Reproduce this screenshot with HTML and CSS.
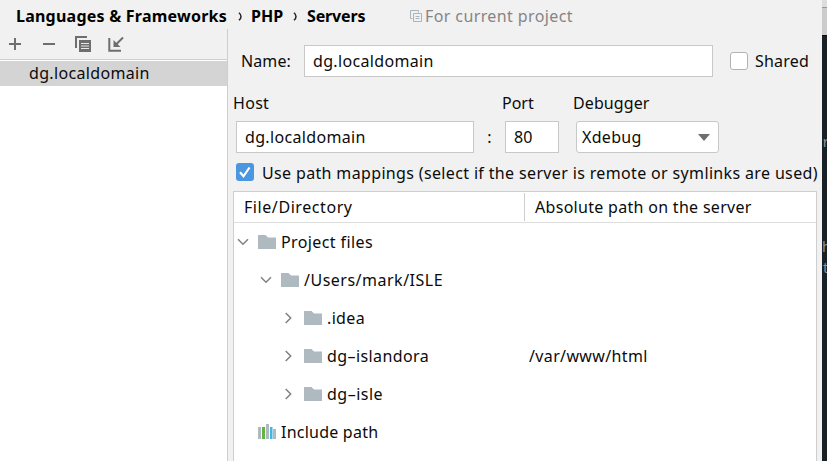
FILE: index.html
```html
<!DOCTYPE html>
<html lang="en">
<head>
<meta charset="utf-8">
<title>Servers</title>
<link rel="stylesheet" href="styles.css">
</head>
<body>
<svg width="0" height="0" class="defs">
  <symbol id="folder" viewBox="0 0 18 14"><path fill="#afb9c0" d="M0 0h7.5l2.5 2.5h8V14H0z"/></symbol>
  <symbol id="down" viewBox="0 0 12 12"><path fill="none" stroke="#808080" stroke-width="1.5" d="M1 3.2l5 5 5-5"/></symbol>
  <symbol id="right" viewBox="0 0 12 12"><path fill="none" stroke="#808080" stroke-width="1.5" d="M2.700 1l5 5-5 5"/></symbol>
</svg>
<div class="app">
  <main class="dialog">
    <header class="crumbs">
      <span class="crumb c1">Languages &amp; Frameworks</span><svg class="sep s1" width="5" height="9" viewBox="0 0 5 9"><path d="M1 .7q2 1.800 2 3.800T1 8.300"/></svg>
      <span class="crumb c2">PHP</span><svg class="sep s2" width="5" height="9" viewBox="0 0 5 9"><path d="M1 .7q2 1.800 2 3.800T1 8.300"/></svg>
      <span class="crumb c3">Servers</span>
      <svg class="scope-icon" width="12" height="12" viewBox="0 0 12 12" fill="none" stroke="#a9b5bd"><path d="M2.500 8.500h-2v-8h8v2M3.500 3.500h8v8h-8zM5.500 6.500h4M5.500 8.500h4"/></svg>
      <span class="scope">For current project</span>
    </header>
    <div class="body">
      <aside class="servers">
        <div class="toolbar">
          <svg width="14" height="14" viewBox="0 0 14 14"><path d="M1 7h12M7 1v12"/></svg>
          <svg width="14" height="14" viewBox="0 0 14 14"><path d="M1 7h12"/></svg>
          <svg width="16" height="16" viewBox="0 0 16 16"><path d="M1 12V1h11"/><path class="solid" d="M4 4h12v12H4z"/><path class="lines" d="M6 7.500h8M6 10h8M6 12.500h8"/></svg>
          <svg width="16" height="16" viewBox="0 0 16 16"><path d="M1.300 2v12.700H13M15 1.500L8 8.500"/><path class="solid" d="M5.500 4v7h7z"/></svg>
        </div>
        <div class="server domain">dg.localdomain</div>
      </aside>
      <section class="form">
        <div class="row name-row">
          <label class="name">Name:</label>
          <div class="input name-input"><span class="domain">dg.localdomain</span></div>
          <span class="check"></span><span class="shared">Shared</span>
        </div>
        <div class="row labels"><span class="host">Host</span><span class="port">Port</span><span class="debugger">Debugger</span></div>
        <div class="row fields">
          <div class="input host-input"><span class="domain">dg.localdomain</span></div>
          <span class="colon">:</span>
          <div class="input port-input"><span>80</span></div>
          <div class="input select"><span class="xdebug">Xdebug</span><svg width="12" height="7" viewBox="0 0 12 7"><path fill="#6e6e6e" d="M0 0h12L6 7z"/></svg></div>
        </div>
        <div class="row mapping">
          <span class="check on"><svg width="18" height="18" viewBox="0 0 18 18"><path fill="none" stroke="#fff" stroke-width="2.200" d="M4 9.300l3.500 4L13.500 4.500"/></svg></span>
          <span class="use">Use path mappings (select if the server is remote or symlinks are used)</span>
        </div>
        <div class="table">
          <div class="thead"><div class="th"><span class="file">File/Directory</span></div><div class="th2"><span class="absolute">Absolute path on the server</span></div></div>
          <div class="tr l0"><svg class="arrow"><use href="#down"/></svg><svg class="folder"><use href="#folder"/></svg><span class="project">Project files</span></div>
          <div class="tr l1"><svg class="arrow"><use href="#down"/></svg><svg class="folder"><use href="#folder"/></svg><span class="users">/Users/mark/ISLE</span></div>
          <div class="tr l2"><svg class="arrow"><use href="#right"/></svg><svg class="folder"><use href="#folder"/></svg><span class="idea">.idea</span></div>
          <div class="tr l2"><svg class="arrow"><use href="#right"/></svg><svg class="folder"><use href="#folder"/></svg><span class="islandora">dg–islandora</span><span class="remote">/var/www/html</span></div>
          <div class="tr l2"><svg class="arrow"><use href="#right"/></svg><svg class="folder"><use href="#folder"/></svg><span class="isle">dg–isle</span></div>
          <div class="tr inc"><svg width="18" height="16" viewBox="0 0 18 16"><path fill="#afb9c0" d="M0 3h3v12H0zM8 0h3v15H8zM15 5h3v10h-3z"/><path fill="#62b543" d="M4 3h3v12H4z"/><path fill="#40b6e0" d="M12 3h2.500v12H12z"/></svg><span class="include">Include path</span></div>
        </div>
      </section>
    </div>
  </main>
  <div class="editor"><div class="tab"></div><span class="code r">r</span><span class="code h">h</span><span class="code t">t</span></div>
</div>
</body>
</html>
```
FILE: styles.css
```css
* { box-sizing: border-box; }
body { margin: 0; font: 16px/22px "Noto Sans", "Open Sans", sans-serif; color: #0b0b0b; overflow: hidden; }
svg { flex: none; display: block; }
.defs { position: absolute; }
span, label { white-space: nowrap; }
.app { display: flex; width: 827px; height: 461px; background: #f1f1f1; }
.dialog { width: 822px; display: flex; flex-direction: column; }
.crumbs { height: 29px; display: flex; align-items: center; padding: 3px 0 0 16px; }
.crumb { font-weight: 700; color: #000; }
.c1 { width: 211px; letter-spacing: .23px; }
.c2 { width: 33px; }
.c3 { width: 59px; letter-spacing: -.15px; }
.sep { margin: 0 8px 0 11px; fill: none; stroke: #222; stroke-width: 1.5; }
.s2 { margin-left: 9px; margin-right: 9px; }
.scope-icon { margin: 0 3px 0 44px; }
.scope { color: #858585; letter-spacing: .39px; }
.body { flex: 1; display: flex; min-height: 0; }
.servers { width: 228px; background: #fff; border-right: 1px solid #cecece; }
.toolbar { height: 31px; background: #f1f1f1; border-bottom: 1px solid #cecece; display: flex; align-items: center; padding-left: 8px; }
.toolbar svg { fill: none; stroke: #6e6e6e; stroke-width: 2; margin-right: 20px; }
.toolbar svg:nth-child(3) { margin-right: 17px; }
.toolbar svg:nth-child(2) { margin-right: 19px; }
.toolbar .solid { fill: #6e6e6e; stroke: none; }
.toolbar .lines { stroke: #e8e8e8; stroke-width: 1; }
.domain { letter-spacing: .34px; }
.server { margin-top: 1px; height: 25px; background: #d4d4d4; padding: 1px 0 0 29px; }
.form { width: 594px; overflow: hidden; }
.row { display: flex; align-items: center; }
.name-row { height: 33px; margin-top: 15px; padding-left: 13px; }
.name { width: 63px; letter-spacing: .1px; }
.input { height: 32px; background: #fff; border: 1px solid #c8c8c8; display: flex; align-items: center; padding-left: 8px; }
.name-input { width: 409px; }
.check { width: 18px; height: 18px; margin-left: 17px; background: #fff; border: 1px solid #b3b3b3; border-radius: 3px; flex: none; }
.shared { margin-left: 7px; letter-spacing: .2px; }
.labels { height: 24px; margin-top: 14px; padding-left: 5px; }
.labels .host { width: 269px; letter-spacing: .3px; }
.labels .port { width: 71px; }
.debugger { letter-spacing: .1px; }
.fields { margin-top: 6px; padding-left: 8px; height: 32px; }
.host-input { width: 238px; }
.colon { width: 31px; text-align: center; }
.port-input { width: 54px; }
.select { margin-left: 17px; width: 143px; border-radius: 3px; padding: 0 8px 0 5px; justify-content: space-between; }
.xdebug { letter-spacing: .3px; }
.mapping { height: 22px; margin-top: 8px; padding-left: 8px; }
.on { margin: 0 8px 0 0; border: 0; background: #4a97e0; }
.use { letter-spacing: .352px; padding-top: 1px; }
.table { margin: 8px 0 0 5px; width: 584px; height: 300px; background: #fff; border: 1px solid #cecece; }
.thead { height: 31px; border-bottom: 1px solid #dedede; display: flex; padding: 1px 0; }
.th { width: 291px; padding: 3px 0 0 10px; border-right: 1px solid #cecece; }
.th2 { padding: 3px 0 0 10px; }
.file { letter-spacing: .57px; }
.absolute { letter-spacing: .3px; }
.tr { height: 38px; display: flex; align-items: center; }
.arrow { width: 12px; height: 12px; }
.folder { width: 18px; height: 14px; margin: 0 5px 0 9px; }
.l0 { padding-left: 3px; }
.l1 { padding-left: 26px; }
.l2 { padding-left: 49px; }
.inc { padding-left: 24px; gap: 5px; }
.project { letter-spacing: .39px; }
.users { letter-spacing: .5px; }
.idea { letter-spacing: .35px; }
.islandora { width: 202px; letter-spacing: .4px; }
.remote { letter-spacing: .36px; }
.isle { letter-spacing: .5px; }
.include { letter-spacing: .23px; }
.editor { width: 5px; background: #192126; overflow: hidden; display: flex; flex-direction: column; }
.tab { height: 36px; background: linear-gradient(#ddd 7px, #999 7px, #999 8px, #ccc 8px); border-bottom: 1px solid #070b0e; }
.code { font: 14px/18px "Liberation Mono", monospace; color: #8b979f; height: 18px; }
.r { margin-top: 98px; }
.h { margin-top: 87px; }
.t { margin-top: 3px; }
```
